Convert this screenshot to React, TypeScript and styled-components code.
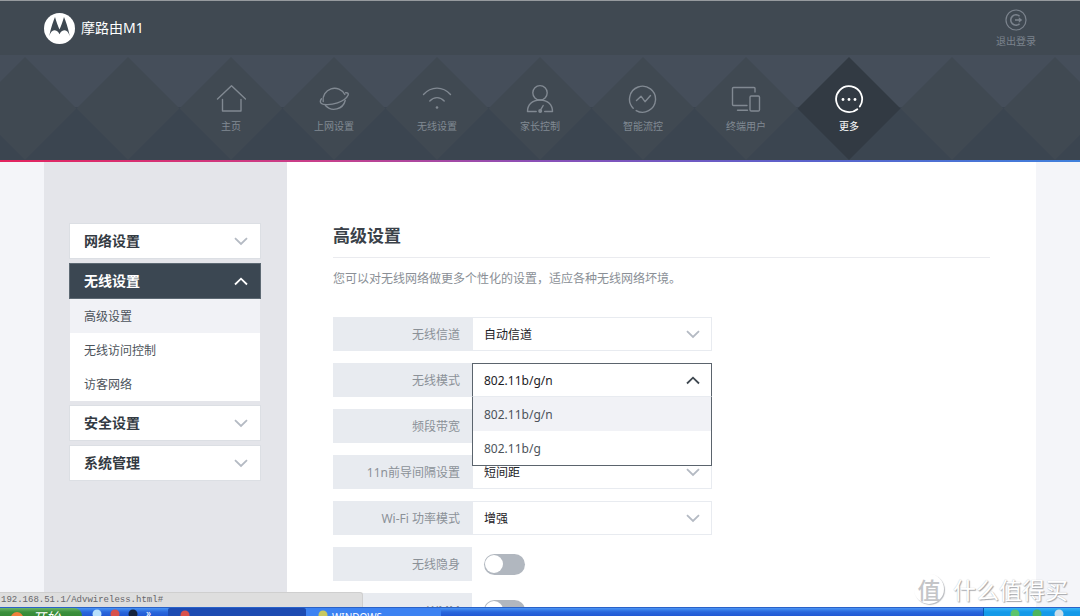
import React, { useState } from "react";
import styled, { createGlobalStyle, css } from "styled-components";

const GlobalStyle = createGlobalStyle`
  *, *::before, *::after { box-sizing: border-box; }
  body {
    margin: 0;
    background: #f4f5f9;
    font-family: "Noto Sans", "Noto Sans CJK SC", sans-serif;
    font-size: 12px;
    line-height: 16px;
    color: #3a4149;
  }
  button, input, select { font: inherit; color: inherit; margin: 0; }
  ul { list-style: none; margin: 0; padding: 0; }
  a { color: inherit; text-decoration: none; }
`;

const Screen = styled.div`
  position: relative;
  height: 100vh;
  display: flex;
  flex-direction: column;
  overflow: hidden;
`;

/* ---------- header ---------- */

const Header = styled.header`
  flex: none;
  background: #404952;
  border-top: 1px solid #969a9e;
`;

const BrandBar = styled.div`
  display: flex;
  justify-content: space-between;
  align-items: flex-start;
  height: 54px;
  padding: 0 44px;
`;

const Brand = styled.a`
  display: flex;
  align-items: center;
  gap: 6px;
  height: 54px;
  color: #fff;
  font-size: 14px;
  line-height: 20px;
`;

const Logout = styled.button`
  display: flex;
  flex-direction: column;
  align-items: center;
  gap: 2px;
  padding: 8px 0 0;
  border: 0;
  background: none;
  color: #7b838d;
  font-size: 10px;
`;

const NavBand = styled.nav`
  overflow: hidden;
  padding: 2px 0 0;
  background: linear-gradient(#454e5a 50%, #3b4550 50%);
`;

const NavList = styled.ul`
  display: flex;
  justify-content: center;
`;

const Diamond = styled.li<{ $active?: boolean }>`
  flex: none;
  width: 103px;
  height: 103px;
  clip-path: polygon(50% 0, 100% 50%, 50% 100%, 0 50%);
  background: ${(p) => (p.$active ? "#323a43" : "#404952")};
`;

const NavLink = styled.a<{ $active?: boolean }>`
  display: flex;
  flex-direction: column;
  align-items: center;
  gap: 4px;
  padding-top: 27px;
  font-size: 10px;
  color: ${(p) => (p.$active ? "#fff" : "#818992")};
`;

const AccentLine = styled.div`
  flex: none;
  height: 2px;
  background: linear-gradient(90deg, #e3245f, #c8408c 30%, #8a50b8 50%, #5a62cc 75%, #3f80dc);
`;

/* ---------- body ---------- */

const Main = styled.main`
  flex: 1;
  min-height: 0;
  display: flex;
  margin: 0 44px;
  background: #fff;
  overflow: hidden;
`;

const Sidebar = styled.aside`
  flex: none;
  width: 243px;
  padding: 61px 26px 0 25px;
  background: #e4e5ea;
`;

const MenuGroup = styled.div`
  margin-bottom: 4px;
`;

const MenuHead = styled.button<{ $open?: boolean }>`
  display: flex;
  align-items: center;
  justify-content: space-between;
  width: 100%;
  height: 36px;
  padding: 0 12px 0 14px;
  border: 1px solid ${(p) => (p.$open ? "#5d6973" : "#dcdfe4")};
  background: ${(p) => (p.$open ? "#3b4752" : "#fff")};
  color: ${(p) => (p.$open ? "#fff" : "#333a42")};
  font-size: 14px;
  font-weight: 700;
`;

const SubMenu = styled.ul`
  margin: 0 1px;
  background: #fff;
`;

const SubLink = styled.a<{ $current?: boolean }>`
  display: flex;
  align-items: center;
  height: 34px;
  padding: 2px 14px 0;
  background: ${(p) => (p.$current ? "#f1f2f6" : "#fff")};
  color: #4c535b;
`;

const Content = styled.section`
  flex: 1;
  min-width: 0;
  padding: 62px 46px 0;
`;

const Title = styled.h1`
  margin: 0;
  padding-bottom: 9px;
  border-bottom: 1px solid #eaebef;
  font-size: 17px;
  line-height: 24px;
  font-weight: 700;
  color: #3a4149;
`;

const Intro = styled.p`
  margin: 13px 0 30px;
  color: #8a8f96;
`;

const Form = styled.form`
  display: flex;
  flex-direction: column;
  gap: 12px;
`;

const Row = styled.div`
  display: flex;
  height: 34px;
`;

const Label = styled.label`
  flex: none;
  display: flex;
  align-items: center;
  justify-content: flex-end;
  width: 139px;
  padding: 2px 12px 0 0;
  background: #e8ebf0;
  color: #8b9198;
`;

const Field = styled.div<{ $open?: boolean }>`
  position: relative;
  width: 240px;
  z-index: ${(p) => (p.$open ? 2 : 0)};
`;

const Select = styled.select<{ $open?: boolean }>`
  display: block;
  width: 100%;
  height: 34px;
  padding: 2px 30px 0 11px;
  appearance: none;
  border: 1px solid #e8ebf0;
  border-radius: 0;
  background: #fff;
  color: #1c2126;
  ${(p) =>
    p.$open &&
    css`
      border-color: #5b646d #5b646d #e8ebf0;
    `}
`;

const FieldArrow = styled.span`
  position: absolute;
  top: 13px;
  right: 12px;
  display: flex;
  pointer-events: none;
`;

const Options = styled.ul`
  position: absolute;
  top: 100%;
  left: 0;
  right: 0;
  border: 1px solid #5b646d;
  border-top: 0;
  background: #fff;
`;

const Option = styled.li<{ $current?: boolean }>`
  display: flex;
  align-items: center;
  height: 34px;
  padding: 2px 11px 0;
  background: ${(p) => (p.$current ? "#f1f2f6" : "#fff")};
  color: #4c535b;
`;

const Switch = styled.input`
  appearance: none;
  display: flex;
  align-items: center;
  align-self: center;
  width: 41px;
  height: 21px;
  margin: 0 0 0 12px;
  padding: 1px;
  border-radius: 11px;
  background: #b1b7bf;
  &::before {
    content: "";
    width: 18px;
    height: 18px;
    border-radius: 50%;
    background: #fff;
  }
  &:checked { justify-content: flex-end; background: #3b4752; }
`;

/* ---------- browser and desktop chrome ---------- */

const StatusBubble = styled.div`
  position: absolute;
  left: 0;
  bottom: 9px;
  z-index: 3;
  width: 363px;
  height: 15px;
  padding-left: 1px;
  border: 1px solid #cfcfcf;
  border-width: 1px 1px 0 0;
  border-radius: 0 3px 0 0;
  background: #dedede;
  font-family: "Liberation Mono", monospace;
  font-size: 9px;
  line-height: 14px;
  color: #66666a;
`;

const Watermark = styled.div`
  position: absolute;
  right: 12px;
  bottom: 12px;
  z-index: 3;
  display: flex;
  align-items: center;
  gap: 9px;
  color: #fff;
  font-family: "Noto Sans CJK SC", sans-serif;
  font-size: 23px;
  line-height: 30px;
  text-shadow: 1px 1px 1px #a4a6aa, 0 0 1px #b8babe;
`;

const Seal = styled.span`
  display: flex;
  align-items: center;
  justify-content: center;
  width: 30px;
  height: 30px;
  border-radius: 50%;
  box-shadow: 1px 1px 1px #b8babe;
  color: #c4c5c8;
  font-size: 23px;
  font-weight: 500;
  text-shadow: none;
`;

const Taskbar = styled.footer`
  flex: none;
  display: flex;
  height: 9px;
  overflow: hidden;
  border-top: 1px solid #2a62c8;
  background: linear-gradient(#4a94f4, #2a66dc 50%, #2158d4);
  color: #fff;
  font-size: 10px;
`;

const StartButton = styled.button`
  display: flex;
  align-items: flex-start;
  gap: 8px;
  width: 82px;
  padding: 2px 0 0 10px;
  border: 0;
  border-radius: 0 8px 0 0;
  background: linear-gradient(#6cb668, #3c8f3c 50%, #358a36);
  color: #fff;
  font-size: 14px;
  font-style: italic;
  line-height: 16px;
`;

const QuickLaunch = styled.div`
  display: flex;
  gap: 8px;
  width: 86px;
  padding-left: 10px;
  line-height: 10px;
`;

const Task = styled.button<{ $active?: boolean }>`
  display: flex;
  align-items: flex-start;
  gap: 4px;
  width: ${(p) => (p.$active ? "138px" : "135px")};
  padding: 1px 0 0 12px;
  border: 0;
  border-radius: 2px 2px 0 0;
  background: ${(p) => (p.$active ? "#1d4bb2" : "#3c82f2")};
  color: #fff;
  white-space: nowrap;
`;

const Tray = styled.div`
  display: flex;
  gap: 12px;
  width: 97px;
  margin-left: auto;
  padding-left: 26px;
  border-left: 1px solid #0b58b0;
  background: linear-gradient(#38b4f8, #149ae8 50%);
`;

/* ---------- drawings ---------- */

const Chevron = ({ up, color }: { up?: boolean; color: string }) => (
  <svg width="14" height="9" viewBox="0 0 14 9" fill="none" stroke={color} strokeWidth="1.8">
    <path d={up ? "M1 7.5 7 1.7 13 7.5" : "M1 1.2 7 7 13 1.2"} />
  </svg>
);

const Logo = () => (
  <svg width="31" height="32" viewBox="0 0 31 32">
    <circle cx="15.5" cy="16.5" r="15.5" fill="#fff" />
    <path
      fill="#3d4750"
      d="M11 5C9.300 9 7 15.500 5.200 24.200c1.200-3.700 3-6 5-6 2.300 0 4.200 1.600 5.300 4 1.100-2.400 3-4 5.300-4 2 0 3.800 2.300 5 6C24 15.500 21.700 9 20 5c-1.400 4.800-2.900 9-4.500 12.500C13.900 14 12.400 9.800 11 5z"
    />
  </svg>
);

const NavIcon = ({ children }: { children: React.ReactNode }) => (
  <svg
    width="30"
    height="30"
    viewBox="0 0 30 30"
    fill="none"
    stroke="currentColor"
    strokeWidth="1.4"
    strokeLinecap="round"
    strokeLinejoin="round"
  >
    {children}
  </svg>
);

const icons = {
  home: (
    <NavIcon>
      <path d="M1.500 15 15.500 1.800 29.500 15M6.500 15.500V27h18.500V15.500" />
    </NavIcon>
  ),
  planet: (
    <NavIcon>
      <path d="M4.200 17.500A11.500 11.500 0 0 1 25.800 10.500M26.200 16.500A11.500 11.500 0 0 1 6.500 21.500" />
      <path d="M26.600 8.800c2.200-.3 3.200.8 2.400 2.500-1.300 3-5.500 5.800-10.500 7.500-6.500 2.100-14.500 2.700-16.500.3-1-1.200-.6-2.900.5-4.300" />
    </NavIcon>
  ),
  wifi: (
    <NavIcon>
      <path d="M1.500 10.500c7.500-8.500 19.500-8.500 27 0M7.800 17c4.200-4.500 10.200-4.500 14.400 0" />
      <circle cx="15" cy="23.500" r="1.300" fill="currentColor" stroke="none" />
    </NavIcon>
  ),
  parent: (
    <NavIcon>
      <circle cx="15" cy="8.800" r="7.200" />
      <path d="M11.200 27.500H2.500C2.500 21 7 16 15 16s12.500 5 12.500 11.500h-7.800" />
      <path d="M15.500 26.200 18.200 21.500" />
      <circle cx="15.200" cy="27" r="1.300" fill="currentColor" />
    </NavIcon>
  ),
  flow: (
    <NavIcon>
      <path d="M5.200 24.300A13 13 0 1 1 8.200 26.600" />
      <path d="M8.500 16.500 13 12.200 17 17.700 22.500 11.500" />
    </NavIcon>
  ),
  devices: (
    <NavIcon>
      <path d="M24 8V4.500a1 1 0 0 0-1-1H2.500a1 1 0 0 0-1 1v16a1 1 0 0 0 1 1H16M6.500 26.300h10" />
      <rect x="19" y="12" width="9.500" height="15" rx="1.200" />
    </NavIcon>
  ),
  more: (
    <NavIcon>
      <path d="M25.800 22.500A13 13 0 1 0 23.300 25.200" strokeWidth="1.800" />
      <g fill="currentColor" stroke="none">
        <circle cx="9" cy="15.500" r="1.400" />
        <circle cx="15" cy="15.500" r="1.400" />
        <circle cx="21" cy="15.500" r="1.400" />
      </g>
    </NavIcon>
  ),
};

const LogoutIcon = () => (
  <svg width="22" height="22" viewBox="0 0 22 22" fill="none" stroke="currentColor">
    <circle cx="11" cy="11" r="10" strokeWidth="1.200" />
    <path d="M14.600 7.300A5.200 5.200 0 1 0 14.600 14.700" strokeWidth="1.600" />
    <path d="M10 11h4.500" strokeWidth="1.600" />
    <path d="M13.800 8.300 17.300 11l-3.500 2.700z" fill="currentColor" stroke="none" />
  </svg>
);

const Dot = ({ color, size = 10 }: { color: string; size?: number }) => (
  <svg width={size} height={size} viewBox="0 0 10 10">
    <circle cx="5" cy="6" r="4.500" fill={color} />
  </svg>
);

/* ---------- data ---------- */

const navItems = [
  { label: "主页", icon: icons.home },
  { label: "上网设置", icon: icons.planet },
  { label: "无线设置", icon: icons.wifi },
  { label: "家长控制", icon: icons.parent },
  { label: "智能流控", icon: icons.flow },
  { label: "终端用户", icon: icons.devices },
  { label: "更多", icon: icons.more, active: true },
];

const menu = [
  { label: "网络设置" },
  { label: "无线设置", children: ["高级设置", "无线访问控制", "访客网络"] },
  { label: "安全设置" },
  { label: "系统管理" },
];

const sideDiamonds = [0, 1, 2, 3, 4, 5];

interface PickProps {
  id: string;
  label: string;
  options: string[];
  open?: boolean;
}

const Pick = ({ id, label, options, open }: PickProps) => {
  const [value, setValue] = useState(options[0]);
  return (
    <Row>
      <Label htmlFor={id}>{label}</Label>
      <Field $open={open}>
        <Select id={id} $open={open} value={value} onChange={(e) => setValue(e.target.value)}>
          {options.map((o) => (
            <option key={o}>{o}</option>
          ))}
        </Select>
        <FieldArrow>
          <Chevron up={open} color={open ? "#3f4850" : "#b4bac3"} />
        </FieldArrow>
        {open && (
          <Options role="listbox" aria-label={label}>
            {options.map((o) => (
              <Option
                key={o}
                role="option"
                aria-selected={o === value}
                $current={o === value}
                onClick={() => setValue(o)}
              >
                {o}
              </Option>
            ))}
          </Options>
        )}
      </Field>
    </Row>
  );
};

const Toggle = ({ id, label }: { id: string; label: string }) => (
  <Row>
    <Label htmlFor={id}>{label}</Label>
    <Switch id={id} type="checkbox" />
  </Row>
);

export default function App() {
  return (
    <Screen>
      <GlobalStyle />
      <Header>
        <BrandBar>
          <Brand href="#">
            <Logo />
            摩路由M1
          </Brand>
          <Logout type="button">
            <LogoutIcon />
            退出登录
          </Logout>
        </BrandBar>
        <NavBand>
          <NavList>
            {sideDiamonds.map((n) => (
              <Diamond key={`l${n}`} aria-hidden />
            ))}
            {navItems.map((item) => (
              <Diamond key={item.label} $active={item.active}>
                <NavLink href="#" $active={item.active}>
                  {item.icon}
                  {item.label}
                </NavLink>
              </Diamond>
            ))}
            {sideDiamonds.map((n) => (
              <Diamond key={`r${n}`} aria-hidden />
            ))}
          </NavList>
        </NavBand>
      </Header>
      <AccentLine />
      <Main>
        <Sidebar>
          {menu.map((group) => (
            <MenuGroup key={group.label}>
              <MenuHead type="button" $open={!!group.children} aria-expanded={!!group.children}>
                {group.label}
                <Chevron up={!!group.children} color={group.children ? "#fff" : "#b4bac3"} />
              </MenuHead>
              {group.children && (
                <SubMenu>
                  {group.children.map((child, i) => (
                    <li key={child}>
                      <SubLink href="#" $current={i === 0}>
                        {child}
                      </SubLink>
                    </li>
                  ))}
                </SubMenu>
              )}
            </MenuGroup>
          ))}
        </Sidebar>
        <Content>
          <Title>高级设置</Title>
          <Intro>您可以对无线网络做更多个性化的设置，适应各种无线网络坏境。</Intro>
          <Form>
            <Pick id="channel" label="无线信道" options={["自动信道"]} />
            <Pick id="mode" label="无线模式" options={["802.11b/g/n", "802.11b/g"]} open />
            <Pick id="bandwidth" label="频段带宽" options={["20MHz"]} />
            <Pick id="guard" label="11n前导间隔设置" options={["短间距"]} />
            <Pick id="power" label="Wi-Fi 功率模式" options={["增强"]} />
            <Toggle id="hidden" label="无线隐身" />
            <Toggle id="wmm" label="WMM" />
          </Form>
        </Content>
      </Main>
      <Taskbar>
        <StartButton type="button">
          <Dot color="#f0803c" size={14} />
          开始
        </StartButton>
        <QuickLaunch>
          <Dot color="#b8e0fa" />
          <Dot color="#d8504c" />
          <Dot color="#16233c" />
          »
        </QuickLaunch>
        <Task type="button" $active>
          <Dot color="#d8504c" />
        </Task>
        <Task type="button">
          <Dot color="#c8c860" />
          WINDOWS
        </Task>
        <Tray>
          <Dot color="#5cc46c" />
          <Dot color="#4cb45c" />
          <Dot color="#c8dce8" />
        </Tray>
      </Taskbar>
      <StatusBubble role="status">192.168.51.1/Advwireless.html#</StatusBubble>
      <Watermark>
        <Seal>值</Seal>
        什么值得买
      </Watermark>
    </Screen>
  );
}
